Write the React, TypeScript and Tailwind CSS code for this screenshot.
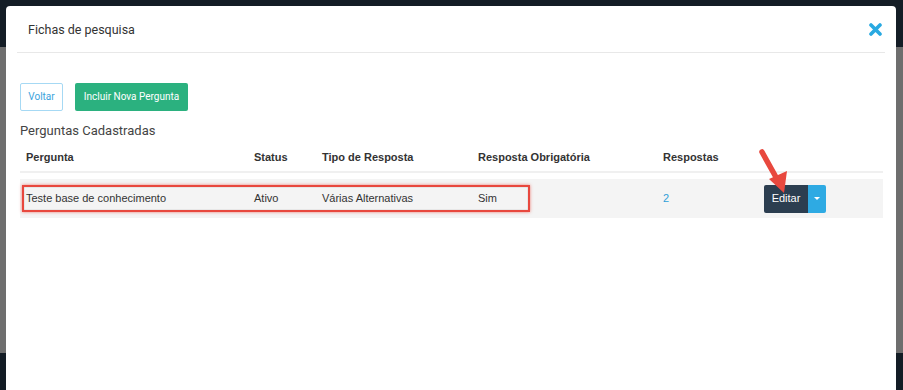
import React from 'react';

const rows = [
  {
    pergunta: 'Teste base de conhecimento',
    status: 'Ativo',
    tipo: 'Várias Alternativas',
    obrigatoria: 'Sim',
    respostas: 2,
  },
];

const CloseIcon = () => (
  <svg width="13" height="13" viewBox="0 0 13 13">
    <path d="M2 2 L11 11 M11 2 L2 11" stroke="#29a9e1" strokeWidth="3.6" strokeLinecap="round" />
  </svg>
);

const Arrow = () => (
  <svg className="absolute left-[752px] top-[145px]" width="44" height="56" viewBox="0 0 44 56">
    <line x1="10" y1="7" x2="25" y2="34" stroke="#e8483e" strokeWidth="5.5" strokeLinecap="round" />
    <polygon points="17,34 35,26 32,48" fill="#e8483e" />
  </svg>
);

export default function App() {
  return (
    <div className="relative w-[903px] h-[390px] overflow-hidden font-['Liberation_Sans',Arial,sans-serif]">
      {/* page behind the modal */}
      <div className="flex flex-col h-full">
        <div className="h-[47px] bg-[#141d26]" />
        <div className="h-[306px] bg-[#6e6e6e]" />
        <div className="flex-1 bg-[#131c25]" />
      </div>

      <div className="absolute left-[6px] top-[6px] w-[890px] h-[384px] bg-white rounded-t-[4px]">
        <div className="mx-[11px] h-[47px] flex items-center justify-between border-b border-[#e8e8e8] pl-[11px] pr-[3px]">
          <h4 className="text-[12.5px] text-[#333] font-['Roboto',sans-serif] pt-[2px]">Fichas de pesquisa</h4>
          <button className="flex items-center pt-[1px]">
            <CloseIcon />
          </button>
        </div>

        <div className="pl-[14px] pr-[13px] pt-[30px]">
          <div className="flex gap-[12px]">
            <button className="h-[28px] w-[43px] border border-[#a6d9f4] rounded-[2px] text-[10px] text-[#3ba3dc] font-['Roboto',sans-serif] pb-[1px]">
              Voltar
            </button>
            <button className="h-[28px] w-[113px] bg-[#2bb17f] rounded-[2px] text-[10px] text-white font-['Roboto',sans-serif] pb-[1px]">
              Incluir Nova Pergunta
            </button>
          </div>

          <div className="mt-[11px] text-[13px] text-[#444] font-['Roboto',sans-serif] leading-[18px]">
            Perguntas Cadastradas
          </div>

          <table className="w-full mt-[4px] text-[11px] text-[#333] border-collapse">
            <thead>
              <tr className="border-b-2 border-[#f0f0f0] h-[28px]">
                <th className="text-left font-bold pl-[6px] w-[234px]">Pergunta</th>
                <th className="text-left font-bold w-[68px]">Status</th>
                <th className="text-left font-bold w-[156px]">Tipo de Resposta</th>
                <th className="text-left font-bold w-[185px]">Resposta Obrigatória</th>
                <th className="text-left font-bold w-[101px]">Respostas</th>
                <th />
              </tr>
            </thead>
            <tbody>
              <tr className="h-[7px]">
                <td colSpan={6} />
              </tr>
              {rows.map((r) => (
                <tr key={r.pergunta} className="bg-[#f4f4f4] h-[39px]">
                  <td className="pl-[6px]">{r.pergunta}</td>
                  <td>{r.status}</td>
                  <td>{r.tipo}</td>
                  <td>{r.obrigatoria}</td>
                  <td className="text-[#2f9fd8]">{r.respostas}</td>
                  <td>
                    <div className="flex h-[28px] w-[62px]">
                      <button className="flex-1 bg-[#2c3e50] text-white text-[11px] rounded-l-[2px]">Editar</button>
                      <button className="w-[18px] bg-[#2eaae3] rounded-r-[2px] flex items-center justify-center">
                        <span className="block w-0 h-0 border-l-[3px] border-r-[3px] border-t-[3px] border-l-transparent border-r-transparent border-t-white" />
                      </button>
                    </div>
                  </td>
                </tr>
              ))}
            </tbody>
          </table>
        </div>
      </div>

      {/* annotation */}
      <div className="absolute left-[22px] top-[185px] w-[508px] h-[27px] border-[2px] border-[#e8483e] shadow-[0_0_3px_rgba(232,72,62,0.7),inset_0_0_1px_rgba(0,0,0,0.5)]" />
      <Arrow />
    </div>
  );
}
